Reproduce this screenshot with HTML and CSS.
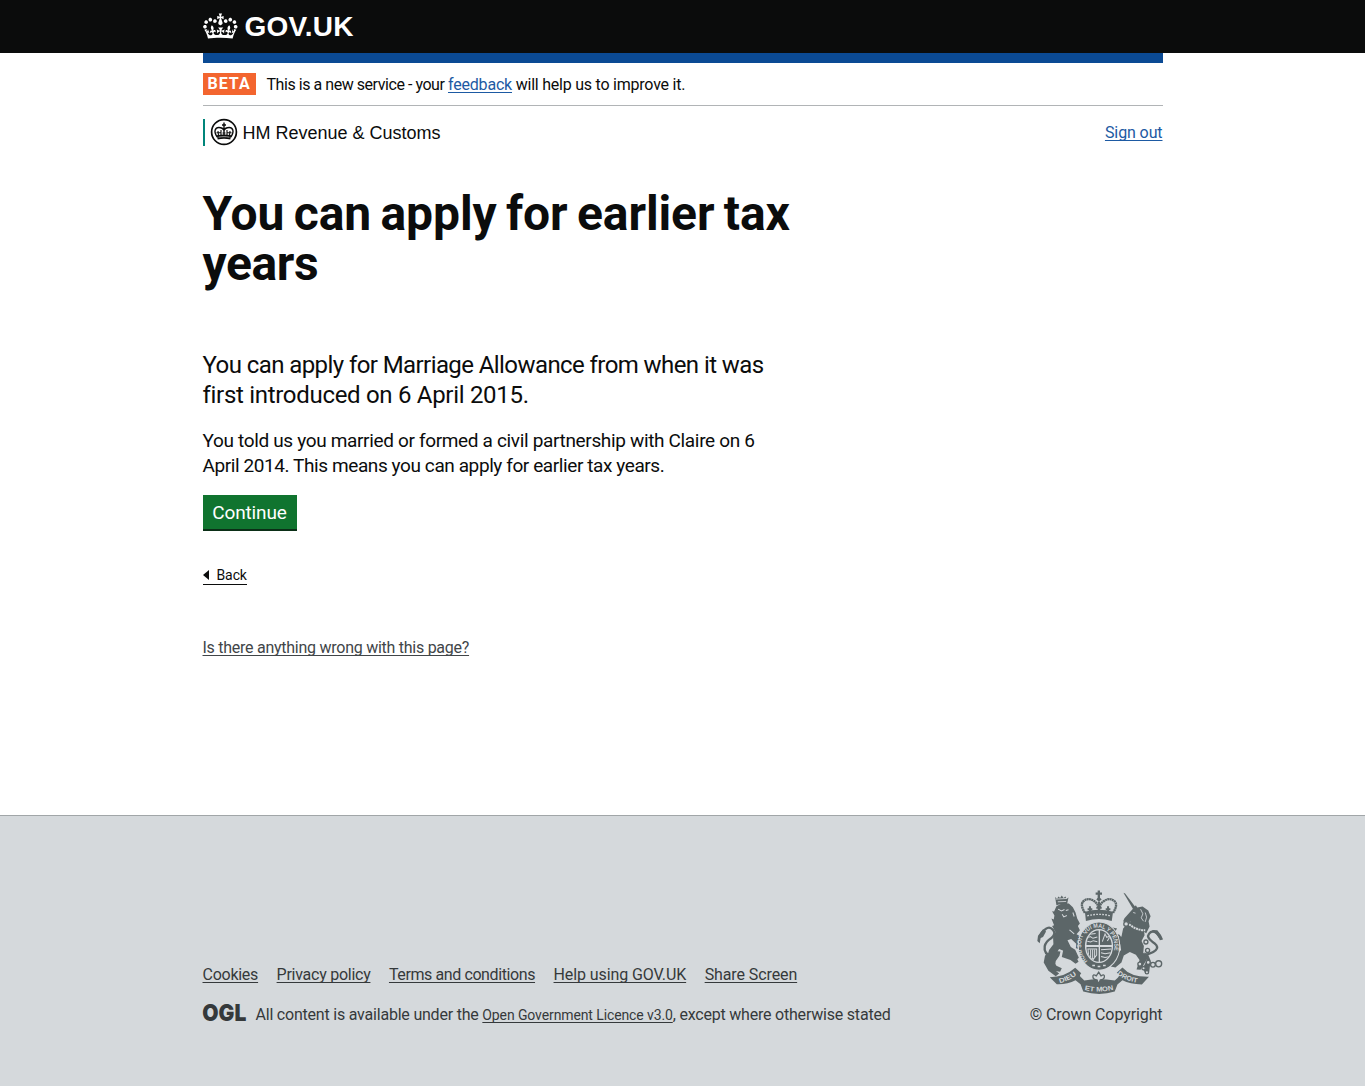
FILE: index.html
```html
<!DOCTYPE html>
<html lang="en">
<head>
<meta charset="utf-8">
<title>You can apply for earlier tax years - GOV.UK</title>
<link rel="stylesheet" href="styles.css">
</head>
<body>
<header class="header">
  <div class="container header-inner">
    <svg class="crown" viewBox="0 3.5 36 27" aria-hidden="true"><path fill="#fff" d="M6.7 12.2c1 .4 2.1-.1 2.5-1s-.1-2.1-1-2.5c-1-.4-2.1.1-2.5 1-.4 1 0 2.1 1 2.5m-4.3 2.5c1 .4 2.1-.1 2.5-1s-.1-2.1-1-2.5c-1-.4-2.1.1-2.5 1-.5 1 0 2.1 1 2.5m-1.3 4.8c1 .4 2.1-.1 2.5-1 .4-1-.1-2.1-1-2.5-1-.4-2.1.1-2.5 1-.4 1 0 2.1 1 2.5m10.4-5.8c1 .4 2.1-.1 2.5-1s-.1-2.1-1-2.5c-1-.4-2.1.1-2.5 1s0 2.1 1 2.5m17.4-1.5c-1 .4-2.1-.1-2.5-1s.1-2.1 1-2.5c1-.4 2.1.1 2.5 1 .5 1 0 2.1-1 2.5m4.3 2.5c-1 .4-2.1-.1-2.5-1s.1-2.1 1-2.5c1-.4 2.1.1 2.5 1 .5 1 0 2.1-1 2.5m1.3 4.8c-1 .4-2.1-.1-2.5-1-.4-1 .1-2.1 1-2.5 1-.4 2.1.1 2.5 1 .4 1 0 2.1-1 2.5m-10.4-5.8c-1 .4-2.1-.1-2.5-1s.1-2.1 1-2.5c1-.4 2.1.1 2.5 1s0 2.1-1 2.5m-5.3-4.9 2.4 1.3V6.5l-2.4.8c-.1-.1-.1-.2-.2-.3s1-3 1-3h-3.4l1 3c-.1.1-.2.2-.2.3-.1.1-2.4-.7-2.4-.7v3.5L17 8.8c.1.1.1.2.2.3l-1.4 4.2c-.1.2-.1.4-.1.6 0 1.1.8 2 1.9 2.2h.7c1-.2 1.9-1.1 1.9-2.1 0-.2 0-.4-.1-.6l-1.4-4.2c-.1-.2 0-.3.1-.4m-1 20.3c4.6 0 8.9.3 12.8.9 1.1-4.6 2.4-7.2 3.8-9.1l-2.6-.9c.3 1.3.3 1.9 0 2.8-.4-.4-.8-1.2-1.1-2.4l-1.2 4.2c.8-.5 1.4-.9 2-.9-1.2 2.6-2.7 3.2-3.6 3-1.2-.2-1.7-1.3-1.5-2.2.3-1.3 1.6-1.6 2.2-.1 1.2-2.4-.8-3.1-2.1-2.4 1.9-1.9 2.2-3.6.6-5.7-2.2 1.7-2.2 3.3-1.2 5.6-1.3-1.5-3.3-.7-2.5 1.7.9-1.4 2.1-.5 2 .8-.2 1.2-1.7 2.1-3.7 2-2.8-.2-3-2.2-3-3.7.7-.1 1.9.5 3 2l.4-4.4c-1.1 1.1-2.2 1.4-3.3 1.4.4-1.2 2.1-3.1 2.1-3.1h-5.5s1.8 2 2.1 3.1c-1.1 0-2.2-.3-3.3-1.4l.4 4.4c1.1-1.5 2.3-2.1 3-2-.1 1.6-.2 3.5-3 3.7-1.9.2-3.5-.8-3.7-2-.2-1.3 1-2.2 1.9-.8.7-2.4-1.3-3.1-2.6-1.7 1-2.3 1-4-1.2-5.6-1.6 2.1-1.3 3.8.6 5.7-1.3-.7-3.2 0-2.1 2.4.6-1.5 1.9-1.1 2.2.1.2.9-.4 1.9-1.5 2.2-1 .2-2.4-.4-3.6-3 .7 0 1.3.4 2 .9L5 20.4c-.3 1.2-.7 1.9-1.2 2.4-.3-.8-.2-1.5 0-2.8l-2.6.9C2.7 22.8 4 25.4 5 30c3.8-.5 8.2-.9 12.7-.9"/></svg>
    <span class="logo-text">GOV.UK</span>
  </div>
</header>
<div class="container page">
  <div class="bar"></div>
  <div class="phase">
    <strong class="tag">BETA</strong>
    <span class="phase-text"><span class="intro">This is a new service - your </span><a class="link feedback" href="#">feedback</a> will help us to improve it.</span>
  </div>
  <div class="org">
    <div class="org-name">
      <svg class="crest" viewBox="0 0 28 28" aria-hidden="true">
        <circle cx="14" cy="14" r="12.4" fill="none" stroke="#0b0c0c" stroke-width="1.7"/>
        <path fill="none" stroke="#0b0c0c" stroke-width="1.4" d="M7.200 19C3 13 5.500 9.500 8.800 9.500c2.600 0 4.500 1.200 5.200 3 .7-1.8 2.600-3 5.200-3 3.300 0 5.800 3.500 1.600 9.500M14 9v9M12 7h4M14 4.500v5.500"/>
        <path fill="none" stroke="#0b0c0c" stroke-width="1.100" d="M8.500 17.500l-.5-4.500M11 17v-5M17 17v-5M19.500 17.500l.5-4.500M6.500 14.700h5M16.500 14.700h5M12.500 15h3"/>
        <path fill="#0b0c0c" d="M6.800 17.300c4.600-1.200 9.800-1.200 14.400 0l-.9 4.200c-4.100-.9-8.500-.9-12.600 0z"/>
        <path stroke="#fff" stroke-width=".6" fill="none" d="M8.500 19.200c3.700-.7 7.300-.7 11 0"/>
      </svg>
      <span class="org-text">HM Revenue &amp; Customs</span>
    </div>
    <a class="link sign-out" href="#">Sign out</a>
  </div>
  <main class="content">
    <h1>You can apply for earlier tax<br><span class="h1-end">years</span></h1>
    <p class="lede">You can apply for Marriage Allowance from when it was<br><span class="lede-end">first introduced on 6 April 2015.</span></p>
    <p class="body">You told us you married or formed a civil partnership with Claire on 6<br><span class="body-end">April 2014. This means you can apply for earlier tax years.</span></p>
    <button class="button" type="button">Continue</button>
    <a class="back" href="#"><span class="arrow"></span>Back</a>
    <a class="report" href="#">Is there anything wrong with this page?</a>
  </main>
</div>
<footer class="footer">
  <div class="container footer-inner">
    <div class="footer-main">
      <nav class="footer-links">
        <a href="#">Cookies</a><a href="#">Privacy policy</a><a class="terms" href="#">Terms and conditions</a><a class="wide" href="#">Help using GOV.UK</a><a class="wide" href="#">Share Screen</a>
      </nav>
      <div class="licence">
        <svg class="ogl" viewBox="0 0 43 20" aria-label="OGL"><text x="-.7" y="17.300" textLength="44" lengthAdjust="spacingAndGlyphs">OGL</text></svg>
        <span>All content is available under the <a href="#">Open Government Licence v3.0</a>, except where otherwise stated</span>
      </div>
    </div>
    <div class="copyright">
      <svg class="arms" viewBox="51 31 376 310" aria-hidden="true">
        <g fill="#5c6668" stroke="none">
          <!-- royal crown -->
          <path d="M232 32h7v6h6v7h-6v9l5 5-8 6-8-6 4-5v-9h-6v-7h6z"/>
          <path d="M194 96q41-13 84 0l-4 27q-38-11-77 0z"/>
          <path d="M194 99q-15-24-5-34 14-13 31-2 15 9 16 28 1-19 16-28 17-11 31 2 10 10-5 34" fill="none" stroke="#5c6668" stroke-width="7" stroke-dasharray="6 1"/>
          <path d="M236 65v32M209 79v18M263 79v18M202 88h14M256 88h14M228 84h16" fill="none" stroke="#5c6668" stroke-width="6"/>
          <path d="M201 108q35-9 70 0" fill="none" stroke="#d5d9dc" stroke-width="4" stroke-dasharray="5 4"/>
          <!-- lion -->
          <path d="M105 52l6 5 4-7 5 5 5-8 5 8 6-5 3 7 6-4-5 23q-16-6-31 0z"/>
          <path d="M107 58l34-2M113 66l25-1" stroke="#d5d9dc" stroke-width="2.500"/>
          <path d="M109 79l17-9 20 1 12 11 8 16 5 18 8 15-6 7 6 13-10 12 17 9 5 17-8 19-16-3 1-14-15-14-11 4 10 20 13 8 11 24-7 6-13-11-17-12-22-9-11 17-7 17 10 16 16 7-5 11-22-3-15-20-6-6 10-36 13-17-1-20 7-17-10-18 6-2-8-20 7 3 2-12-7-13 6 1z"/>
          <path d="M98 232q-28-10-24-33 3-14 19-24 16-13 6-25-10-12-22-3-13 8-18 26" fill="none" stroke="#5c6668" stroke-width="7"/>
          <path d="M52 183l2-16 15-19 9 7-9 16-7 3-3 16z"/>
          <path d="M75 226l-4 21 14 25 22 16 10-8-14-11 4-26 11-16 3-13-22-2zM130 206l35 19 10 20-9 6-15-11-26-9z"/>
          <path d="M114 88l10 5 9-4M137 92l8-2M126 103l5 8 9-4M148 150l14 12M158 98l4 12" fill="none" stroke="#d5d9dc" stroke-width="3"/>
          <!-- unicorn -->
          <path d="M309 39l5 2 31 41-7 6z"/>
          <path d="M336 88l10-12 4 7 16-3 17 12 7 17-6 15 3 16-10 20-9-6-2 10-35-18-1-21-13 5-9-6 4-9z"/>
          <path d="M328 123l12 16 30 10 2 17-9 17 7 15-2 20 10 9-2 16-16 26-12-1 9-28-11-16-18-8-18 10-7 21-18 15-14-3 12-17 9-22 10-10-3-18-10-5-18 8-17-15 1-24 15-15 20 5-7 10-15 1-1 15 13 3 9-11 14 6 5-24z"/>
          <path d="M371 225q33-7 38-20 3-10-14-20-18-13-10-23 8-12 21-4 11 6 15 22" fill="none" stroke="#5c6668" stroke-width="7"/>
          <path d="M394 150l16 1 11 14 7 15-13-5-9-13z"/>
          <path d="M326 133q21 18 48 18" fill="none" stroke="#d5d9dc" stroke-width="6" stroke-dasharray="6 2"/>
          <path d="M338 98l7 2M360 88l7 14-5 12 7 10M374 98l4 14-4 14" fill="none" stroke="#d5d9dc" stroke-width="2.500"/>
          <path d="M370 217l8 26-12 22 7 12 13-2 4-34-8-19z"/>
        </g>
        <g fill="#d5d9dc" stroke="#5c6668" stroke-width="4">
          <circle cx="317" cy="132" r="7"/><circle cx="292" cy="171" r="6"/><circle cx="376" cy="186" r="6"/><circle cx="381" cy="211" r="6"/><circle cx="358" cy="252" r="6"/><circle cx="369" cy="264" r="5"/><circle cx="383" cy="247" r="6"/><circle cx="397" cy="254" r="7"/><circle cx="414" cy="251" r="9"/><circle cx="379" cy="276" r="5"/>
        </g>
        <!-- garter and shield -->
        <ellipse cx="236" cy="198" rx="62" ry="72" fill="#5c6668" stroke="#d5d9dc" stroke-width="3"/>
        <ellipse cx="236" cy="198" rx="42" ry="51" fill="#d5d9dc"/>
        <clipPath id="shield"><ellipse cx="236" cy="198" rx="38" ry="47"/></clipPath>
        <g clip-path="url(#shield)" fill="#5c6668">
          <path d="M198 151h37v44h-37zM239 151h37v44h-37zM198 201h37v46h-37zM239 201h37v46h-37z"/>
          <path d="M201 174l9-4 8 5 13-4M201 184l10 2 8-4 12 3M207 163l19-2M246 185l8-23 5 10 11-4-9 15M242 209l31-2M242 218l12 3 17-3M242 229l12 3 16-3M203 207h26v18l-12 15-12-14zM211 209v24M217 209v28M223 209v23" fill="none" stroke="#d5d9dc" stroke-width="3"/>
        </g>
        <path id="garter" d="M202 243C173 213 179 167 204 153C231 132 267 147 279 178C287 209 278 233 260 247" fill="none"/>
        <text class="motto garter-text"><textPath href="#garter" textLength="228" lengthAdjust="spacingAndGlyphs">HONI SOIT QUI MAL Y PENSE</textPath></text>
        <path d="M216 256h8m8 3h8m8-3h8" stroke="#d5d9dc" stroke-width="4"/>
        <!-- scroll -->
        <path fill="#5c6668" d="M89 291q45 0 76-28l18 16q-8 8 1 14l8 8q43-7 91 0l9-8q9-8-3-15l17-16q25 29 79 28l-21 23q-36-2-58-13l-15 13-8 21q-46 14-94 0l-8-22-15-12q-24 13-56 12z"/>
        <path fill="#d5d9dc" d="M184 282q10-10 21 1l-5 15h-8zM289 280q-9-8-18 2l5 14 8 2z"/>
        <path id="dieu" d="M119 309q29-7 53-27" fill="none"/>
        <path id="etmon" d="M193 329q43 10 88-1" fill="none"/>
        <path id="droit" d="M290 282q25 21 64 26" fill="none"/>
        <text class="motto"><textPath href="#dieu" textLength="57" lengthAdjust="spacingAndGlyphs">DIEU</textPath></text>
        <text class="motto"><textPath href="#etmon" textLength="87" lengthAdjust="spacingAndGlyphs">ET MON</textPath></text>
        <text class="motto"><textPath href="#droit" textLength="66" lengthAdjust="spacingAndGlyphs">DROIT</textPath></text>
        <path fill="#d5d9dc" stroke="#5c6668" stroke-width="4" d="M235 276l7 11q12-7 10 4-2 8-12 8l-5 12-5-12q-11 0-12-8-2-11 10-4z"/>
      </svg>
      <span>© Crown Copyright</span>
    </div>
  </div>
</footer>
</body>
</html>
```
FILE: styles.css
```css
* { box-sizing: border-box; }
body {
  margin: 0;
  min-height: 1086px;
  display: flex;
  flex-direction: column;
  background: #fff;
  color: #0b0c0c;
  font: 16px/20px Roboto, "Noto Sans", sans-serif;
  letter-spacing: -0.26px;
}
a { color: inherit; text-decoration-thickness: 1px; text-underline-offset: 2px; text-decoration-skip-ink: none; }
.container { width: 960px; margin: 0 auto; }
.header { height: 53px; background: #0b0c0c; }
.header-inner { display: flex; padding-top: 13px; gap: 7px; }
.crown { width: 35px; height: 26px; }
.logo-text { color: #fff; font: bold 28px/28px "Liberation Sans", sans-serif; letter-spacing: 0.2px; }
.page { height: 762px; }
.bar { height: 10px; background: #0b4a94; }
.phase {
  display: flex;
  align-items: flex-start;
  gap: 11px;
  height: 43px;
  padding-top: 10px;
  border-bottom: 1px solid #b1b4b6;
}
.tag {
  width: 53px;
  height: 22px;
  padding-left: 5px;
  background: #f3652f;
  color: #fff;
  font-weight: 700;
  line-height: 22px;
  letter-spacing: 1px;
}
.phase-text { padding-top: 2px; white-space: pre; letter-spacing: -0.23px; }
.intro { letter-spacing: -0.45px; }
.link { color: #1d5aa3; }
.feedback { letter-spacing: -0.19px; }
.org { display: flex; justify-content: space-between; padding-top: 13px; }
.org-name {
  display: flex;
  height: 27px;
  padding-left: 5px;
  gap: 5px;
  border-left: 2px solid #00857a;
  font: 18px/27px "Liberation Sans", sans-serif;
  letter-spacing: 0;
}
.crest { width: 28px; height: 28px; margin-top: -1px; }
.org-text { padding-top: 1px; }
.sign-out { padding-top: 4px; letter-spacing: -0.1px; }
.content { display: flex; flex-direction: column; align-items: flex-start; padding-top: 43px; }
h1 { margin: 0 0 61px; font-size: 48px; line-height: 50px; font-weight: 700; letter-spacing: -0.1px; word-spacing: -2.4px; }
.h1-end { letter-spacing: -0.4px; }
p { margin: 0; }
.lede { margin-bottom: 18px; font-size: 24px; line-height: 30px; letter-spacing: -0.58px; }
.lede-end { letter-spacing: -0.3px; }
.body { margin-bottom: 17px; font-size: 19px; line-height: 25px; letter-spacing: -0.34px; }
.body-end { letter-spacing: -0.41px; }
.button {
  width: 94px;
  height: 34px;
  padding: 1px 0 0;
  border: 0;
  background: #10742f;
  box-shadow: 0 2px 0 #0b2f17;
  color: #fff;
  font: 19px/33px Roboto, sans-serif;
  letter-spacing: -0.14px;
}
.back {
  display: flex;
  align-items: center;
  height: 21px;
  margin-top: 35px;
  padding-top: 1px;
  border-bottom: 1px solid #0b0c0c;
  font-size: 14px;
  letter-spacing: -0.1px;
  text-decoration: none;
}
.arrow { margin-right: 8px; border: solid transparent; border-width: 5px 6px 5px 0; border-right-color: #0b0c0c; }
.report { margin-top: 53px; color: #414548; }
.footer { flex: 1; border-top: 1px solid #a1a6a8; background: #d5d9dc; color: #35393b; }
.footer-inner { display: flex; justify-content: space-between; padding-top: 74px; }
.footer-main { padding-top: 75px; }
.footer-links { display: flex; gap: 18.5px; }
.footer-links .terms { letter-spacing: -0.4px; }
.footer-links .wide { letter-spacing: -0.1px; }
.licence { display: flex; margin-top: 20px; gap: 10px; letter-spacing: -0.21px; }
.licence a { font-size: 14px; letter-spacing: -0.11px; }
.ogl { width: 43px; height: 20px; margin-top: -1px; overflow: visible; }
.ogl text { font: 900 23.5px Inter, sans-serif; letter-spacing: 0; fill: #35393b; }
.copyright { display: flex; flex-direction: column; align-items: flex-end; letter-spacing: -0.1px; }
.arms { width: 126px; height: 104px; margin-bottom: 11px; }
.motto { font: bold 20px "Liberation Sans", sans-serif; fill: #d5d9dc; letter-spacing: 0; }
.garter-text { font-size: 18px; }
```
